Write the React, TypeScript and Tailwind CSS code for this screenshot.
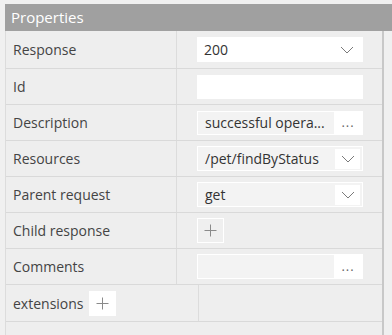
import React from "react";

const Chevron = () => (
  <svg width="14" height="8" viewBox="0 0 14 8" fill="none">
    <path d="M1 1L7 7L13 1" stroke="#7a7a7a" strokeWidth="1" />
  </svg>
);

const Plus = () => (
  <svg width="13" height="13" viewBox="0 0 13 13" fill="none">
    <path d="M6.5 0.5V12.5M0.5 6.5H12.5" stroke="#8a8a8a" strokeWidth="1" />
  </svg>
);

const Dots = () => (
  <span className="text-[13px] leading-none text-[#666] tracking-[1px]">...</span>
);

function Row({ label, children, first }: { label: string; children?: React.ReactNode; first?: boolean }) {
  return (
    <div className={`flex border-b border-[#d9d9d9] ${first ? "h-[38px]" : "h-[36px]"}`}>
      <div className="w-[171px] flex items-center pl-[7px] text-[14px] text-[#444] border-r border-[#dcdcdc]">
        {label}
      </div>
      <div className="flex-1 flex items-center pl-[20px]">{children}</div>
    </div>
  );
}

export default function App() {
  return (
    <div
      className="w-[392px] h-[335px] bg-[#f0f0f0] overflow-hidden pt-[4px]"
      style={{ fontFamily: '"Open Sans", "Noto Sans", sans-serif' }}
    >
      <div className="ml-[5px] h-[27px] bg-[#a0a0a0] text-white text-[15px] flex items-center pl-[6px]">
        Properties
      </div>
      <div className="ml-[5px] w-[379px] h-[304px] border-l border-l-[#dcdcdc] border-r-2 border-r-[#c8c8c8] bg-[#eeeeee]">
        <Row label="Response" first>
          <div className="w-[166px] h-[25px] bg-white flex items-center justify-between pl-[7px] pr-[9px] text-[14px] text-[#333]">
            <span>200</span>
            <Chevron />
          </div>
        </Row>
        <Row label="Id">
          <div className="w-[166px] h-[24px] bg-white" />
        </Row>
        <Row label="Description">
          <div className="w-[166px] h-[24px] bg-white p-[1px] flex">
            <div className="flex-1 min-w-0 bg-[#f3f3f3] flex items-center pl-[7px] pr-[2px] text-[14px] text-[#333] whitespace-nowrap">
              <span>successful opera...</span>
            </div>
            <div className="w-[28px] flex items-center justify-center">
              <Dots />
            </div>
          </div>
        </Row>
        <Row label="Resources">
          <div className="w-[166px] h-[25px] border border-white bg-[#f3f3f3] flex items-center pl-[7px] pr-[2px] text-[14px] text-[#333]">
            <span className="flex-1 whitespace-nowrap">/pet/findByStatus</span>
            <div className="w-[25px] h-[20px] bg-white flex items-center justify-center">
              <Chevron />
            </div>
          </div>
        </Row>
        <Row label="Parent request">
          <div className="w-[166px] h-[25px] border border-white bg-[#f3f3f3] flex items-center pl-[7px] pr-[2px] text-[14px] text-[#333]">
            <span className="flex-1">get</span>
            <div className="w-[25px] h-[20px] bg-white flex items-center justify-center">
              <Chevron />
            </div>
          </div>
        </Row>
        <Row label="Child response">
          <div className="w-[27px] h-[25px] border border-white bg-[#efefef] flex items-center justify-center">
            <Plus />
          </div>
        </Row>
        <Row label="Comments">
          <div className="w-[166px] h-[25px] bg-white p-[1px] flex">
            <div className="flex-1 bg-[#f3f3f3]" />
            <div className="w-[28px] flex items-center justify-center">
              <Dots />
            </div>
          </div>
        </Row>
        <div className="flex border-b border-[#d9d9d9] h-[37px]">
          <div className="w-[193px] flex items-center pl-[7px] text-[14px] text-[#444] border-r border-[#dcdcdc]">
            <span>extensions</span>
            <div className="ml-[5px] w-[27px] h-[25px] bg-white flex items-center justify-center">
              <Plus />
            </div>
          </div>
          <div className="flex-1" />
        </div>
      </div>
    </div>
  );
}
